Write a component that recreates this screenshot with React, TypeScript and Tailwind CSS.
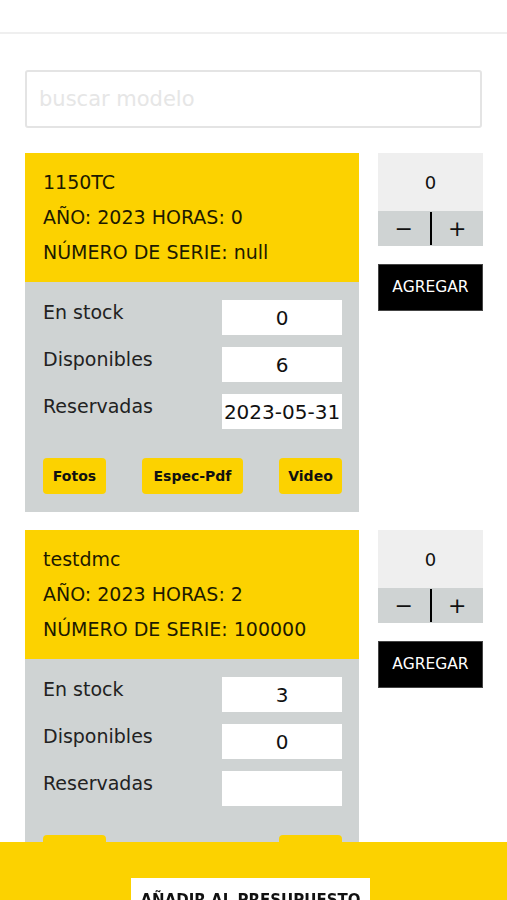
import React from 'react';

type Item = {
  modelo: string;
  anio: string;
  horas: string;
  serie: string;
  stock: string;
  disponibles: string;
  reservadas: string;
  pdf: boolean;
};

const items: Item[] = [
  { modelo: '1150TC', anio: '2023', horas: '0', serie: 'null', stock: '0', disponibles: '6', reservadas: '2023-05-31', pdf: true },
  { modelo: 'testdmc', anio: '2023', horas: '2', serie: '100000', stock: '3', disponibles: '0', reservadas: '', pdf: false },
];

const font = { fontFamily: '"DejaVu Sans", "Open Sans", sans-serif' };

const Row = ({ label, value }: { label: string; value: string }) => (
  <div className="flex items-start justify-between">
    <span className="text-[19px] leading-[24px] text-[#222]">{label}</span>
    <div className="flex h-[35px] w-[120px] items-center justify-center bg-white text-[20px] text-[#111]">
      {value}
    </div>
  </div>
);

const Card = ({ item }: { item: Item }) => (
  <div className="flex gap-[19px]">
    <div className="w-[334px] shrink-0">
      <div className="bg-[#fcd200] px-[18px] py-3 text-[19px] leading-[35px] text-[#1d1a00]">
        <div>{item.modelo}</div>
        <div>AÑO: {item.anio} HORAS: {item.horas}</div>
        <div>NÚMERO DE SERIE: {item.serie}</div>
      </div>
      <div className="bg-[#cfd3d3] pl-[18px] pr-[17px] pt-[18px] pb-[18px]">
        <div className="flex flex-col gap-3">
          <Row label="En stock" value={item.stock} />
          <Row label="Disponibles" value={item.disponibles} />
          <Row label="Reservadas" value={item.reservadas} />
        </div>
        <div className="mt-[29px] flex justify-between">
          <button className="h-9 w-[63px] rounded-[4px] bg-[#fcd200] text-[14px] font-semibold text-[#111]">Fotos</button>
          {item.pdf && (
            <button className="h-9 w-[101px] rounded-[4px] bg-[#fcd200] text-[14px] font-semibold text-[#111]">Espec-Pdf</button>
          )}
          <button className="h-9 w-[63px] rounded-[4px] bg-[#fcd200] text-[14px] font-semibold text-[#111]">Video</button>
        </div>
      </div>
    </div>
    <div className="w-[105px] shrink-0">
      <div className="flex h-[58px] items-center justify-center bg-[#efefef] text-[18px] text-[#111]">0</div>
      <div className="flex h-[35px] items-center bg-[#cfd3d3] text-[22px] text-[#111]">
        <span className="flex-1 text-center">−</span>
        <span className="h-[33px] w-[2px] bg-black" />
        <span className="flex-1 text-center">+</span>
      </div>
      <button className="mt-[18px] h-[47px] w-full border border-[#444] bg-black text-[15.5px] text-white">
        AGREGAR
      </button>
    </div>
  </div>
);

export default function App() {
  return (
    <div className="relative min-h-screen bg-white pb-[80px]" style={font}>
      <div className="h-[34px] border-b-2 border-[#efefef]" />
      <div className="px-[25px] pt-[36px]">
        <input
          placeholder="buscar modelo"
          className="h-[58px] w-full rounded-[3px] border-2 border-[#e4e4e4] px-3 text-[21px] placeholder:text-[#e6e6e6] outline-none"
        />
        <div className="mt-[25px] flex flex-col gap-[18px]">
          {items.map((it) => (
            <Card key={it.modelo} item={it} />
          ))}
        </div>
      </div>
      <div className="fixed bottom-0 left-0 right-0 flex h-[58px] justify-center bg-[#fcd200]">
        <button className="mr-[6px] mt-[36px] h-[40px] w-[239px] self-start bg-white pt-1 text-[15px] font-bold text-[#111]">
          AÑADIR AL PRESUPUESTO
        </button>
      </div>
    </div>
  );
}
